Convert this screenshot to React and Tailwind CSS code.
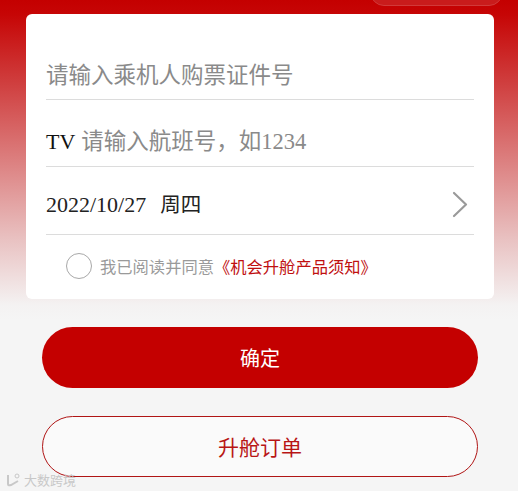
export default function App() {
  const font = { fontFamily: '"Liberation Serif", "Noto Sans CJK SC", serif' };
  return (
    <div
      className="relative min-h-[491px] w-full overflow-hidden bg-[#f5f5f5] bg-[linear-gradient(180deg,#c40000_0px,#c60505_14px,#cf3c3c_80px,#dc7f7f_160px,#e9c2c2_240px,#f4f2f2_305px,#f5f5f5_320px)] pt-[14px]"
      style={font}
    >
      <div className="absolute left-[370px] top-[-26px] h-[32px] w-[133px] rounded-[14px] border border-[#d13a3a] bg-[#c91c1c]" />

      <div className="ml-[26px] mr-[24px] flex h-[285px] flex-col rounded-[6px] bg-white px-[20px]">
        <div className="flex h-[86px] items-end border-b border-[#dcdcdc] pb-[9px]">
          <span className="text-[22.5px] leading-[28px] text-[#8a8a8a]">请输入乘机人购票证件号</span>
        </div>
        <div className="flex h-[67px] items-end border-b border-[#dcdcdc] pb-[10px]">
          <span className="text-[22px] leading-[28px] text-[#111]">TV</span>
          <span className="ml-[6px] text-[22.5px] leading-[28px] text-[#8a8a8a]">请输入航班号，如1234</span>
        </div>
        <div className="flex h-[68px] items-center justify-between border-b border-[#dcdcdc] pt-[8px]">
          <div className="flex items-center text-[22px] leading-[28px] text-[#222]">
            <span>2022/10/27</span>
            <span className="ml-[14px] text-[20.5px]">周四</span>
          </div>
          <svg width="16" height="27" viewBox="0 0 16 27" className="mr-[6px]">
            <path d="M2 2 L14 13.5 L2 25" fill="none" stroke="#9a9a9a" strokeWidth="2.2" strokeLinecap="round" strokeLinejoin="round" />
          </svg>
        </div>
        <div className="flex flex-1 items-center pl-[20px] pb-[2px]">
          <span className="h-[26px] w-[26px] rounded-full border border-[#a8a8a8]" />
          <span className="ml-[8px] text-[16.3px] leading-[20px] text-[#9a9a9a]" style={{ fontFamily: '"Noto Sans CJK SC", sans-serif' }}>
            我已阅读并同意
          </span>
          <span className="text-[16.3px] leading-[20px] text-[#c01010]" style={{ fontFamily: '"Noto Sans CJK SC", sans-serif' }}>
            《机会升舱产品须知》
          </span>
        </div>
      </div>

      <div className="ml-[42px] mr-[40px] mt-[28px] flex flex-col gap-[28px]">
        <button className="flex h-[61px] items-center justify-center rounded-full bg-[#c40000] text-[20px] text-white" style={{ fontFamily: '"Noto Sans CJK SC", sans-serif' }}>
          确定
        </button>
        <button className="flex h-[61px] items-center justify-center rounded-full border border-[#b01515] bg-[#fafafa] text-[21px] text-[#b81515]" style={{ fontFamily: '"Noto Sans CJK SC", sans-serif' }}>
          升舱订单
        </button>
      </div>

      <div className="absolute bottom-[4px] left-[5px] flex items-center gap-[3px] text-[#c8c8c8]">
        <svg width="16" height="14" viewBox="0 0 16 14">
          <path d="M3 2 L3 11 Q3 13 6 12 L13 8" fill="none" stroke="#c8c8c8" strokeWidth="2" />
          <circle cx="12" cy="3" r="2" fill="none" stroke="#c8c8c8" strokeWidth="1" />
        </svg>
        <span className="text-[13px] leading-[14px]" style={{ fontFamily: '"Noto Sans CJK SC", sans-serif' }}>大数跨境</span>
      </div>
    </div>
  );
}
